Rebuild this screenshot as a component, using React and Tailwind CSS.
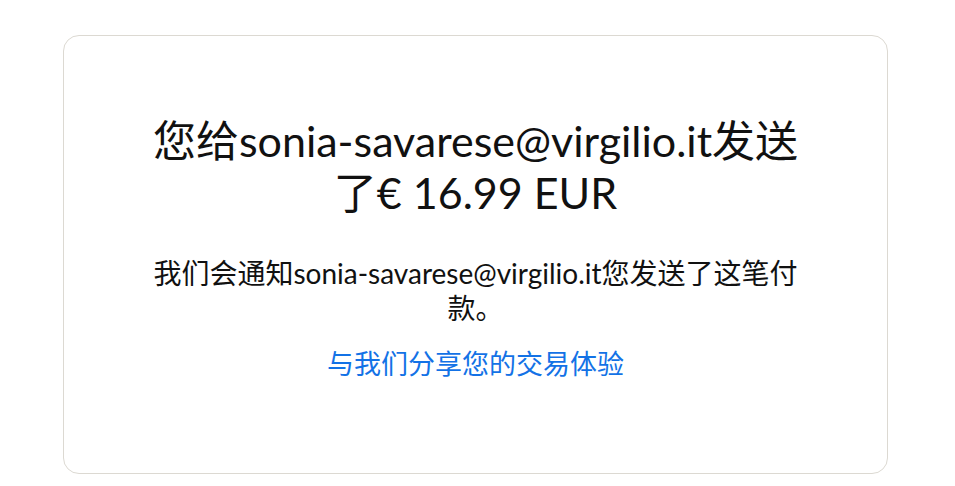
export default function App() {
  return (
    <div className="w-[955px] h-[486px] bg-white pt-[35px] pl-[63px]" style={{ fontFamily: "Lato, 'Noto Sans CJK SC', sans-serif" }}>
      <div className="w-[825px] h-[439px] rounded-[16px] border border-[#dcd9d2] flex flex-col items-center pt-[79px]">
        <h1 className="max-w-[670px] text-center text-[43px] leading-[52px] text-[#111] font-normal">
          您给sonia-savarese@virgilio.it发送了€ 16.99 EUR
        </h1>
        <p className="mt-[37px] max-w-[655px] text-center text-[28px] leading-[35px] text-[#111]">
          我们会通知sonia-savarese@virgilio.it您发送了这笔付款。
        </p>
        <a className="mt-[20px] text-center text-[27px] leading-[35px] text-[#1372e6]">与我们分享您的交易体验</a>
      </div>
    </div>
  );
}
